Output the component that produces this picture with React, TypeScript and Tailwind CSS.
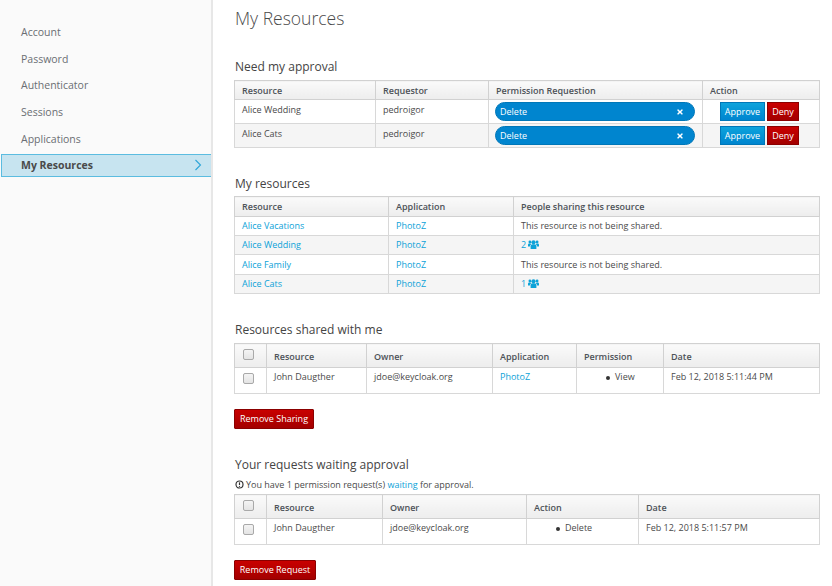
import React from "react";
import { FaTimes } from "react-icons/fa";

const th = "border border-[#d1d1d1] bg-gradient-to-b from-[#fafafa] to-[#ededed] px-[7px] py-0 text-left font-semibold text-[#4d5258] align-middle";
const td = "border border-[#d8d8d8] px-[7px] py-0 align-top text-[#4a4a4a]";
const link = "text-[#0ca2d8]";
const redBtn = "h-[20px] whitespace-nowrap rounded-[1px] border border-[#8b0000] bg-gradient-to-b from-[#c90000] to-[#a30000] px-[4px] text-[9px] font-medium leading-[18px] text-white";

function Nav({ label, active }: { label: string; active?: boolean }) {
  if (active)
    return (
      <div className="ml-[1px] flex h-[23px] items-center justify-between border border-r-0 border-[#5bbce0] bg-[#c7e4f0] pl-[19px] pr-[9px] font-bold text-[#4a4a4a]">
        <span>{label}</span>
        <svg width="8" height="12" viewBox="0 0 8 12" fill="none" stroke="#2da5d8" strokeWidth="1.1"><path d="M1.5 1l5 5-5 5" /></svg>
      </div>
    );
  return <div className="flex h-[26.6px] items-center pl-[21px] text-[#6a6e73]">{label}</div>;
}

function Heading({ children, className }: { children: React.ReactNode; className?: string }) {
  return <h2 className={"text-[12px] leading-[17px] text-[#444] " + (className ?? "")}>{children}</h2>;
}

function Check() {
  return <span className="block h-[11px] w-[11px] rounded-[2px] border border-[#a9a9a9] bg-gradient-to-b from-[#f4f4f4] to-[#e4e4e4]" />;
}

function Bullet() {
  return <span className="mr-[5px] inline-block h-[4px] w-[4px] rounded-full bg-[#333] align-middle" />;
}

function Pill() {
  return (
    <div className="flex h-[19px] w-[200px] items-center justify-between rounded-full border border-[#0077b8] bg-[#0085cf] pl-[4px] pr-[10px] font-medium text-white">
      <span>Delete</span>
      <FaTimes className="h-[8px] w-[8px]" />
    </div>
  );
}

function Actions() {
  return (
    <div className="flex justify-start gap-[2px] pl-[17px]">
      <span className="flex h-[19px] w-[45px] items-center justify-center border border-[#0077b8] bg-gradient-to-b from-[#0ea3dc] to-[#0085cf] text-[9px] font-medium text-white">Approve</span>
      <span className="flex h-[19px] w-[32px] items-center justify-center border border-[#8b0000] bg-gradient-to-b from-[#c90000] to-[#a30000] text-[9px] font-medium text-white">Deny</span>
    </div>
  );
}

function Row1({ name, alt }: { name: string; alt?: boolean }) {
  return (
    <tr className={alt ? "h-[24px] bg-[#f5f5f5]" : "h-[24px]"}>
      <td className={td + " pt-[3px]"}>{name}</td>
      <td className={td + " pt-[3px]"}>pedroigor</td>
      <td className={td + " !pl-[6px] pt-[2px]"}><Pill /></td>
      <td className={td + " !px-0 pt-[2px]"}><Actions /></td>
    </tr>
  );
}

function Row2({ name, people, alt, h }: { name: string; people: React.ReactNode; alt?: boolean; h: string }) {
  return (
    <tr className={(alt ? "bg-[#f5f5f5] " : "") + h}>
      <td className={td + " pb-[1px] !align-middle"}><span className={link}>{name}</span></td>
      <td className={td + " pb-[1px] !align-middle"}><span className={link}>PhotoZ</span></td>
      <td className={td + " pb-[1px] !align-middle"}>{people}</td>
    </tr>
  );
}

function Shared({ count }: { count: string }) {
  return (
    <span className={link + " inline-flex items-center gap-[2px]"}>
      {count}
      <svg width="11" height="9" viewBox="0 0 11 9" fill="currentColor">
        <circle cx="5.5" cy="2.3" r="2.1" />
        <path d="M2.6 9V6.2c0-1.2.9-1.9 2-1.9h1.8c1.1 0 2 .7 2 1.9V9z" />
        <circle cx="1.9" cy="2" r="1.4" />
        <circle cx="9.1" cy="2" r="1.4" />
        <path d="M0 6.6V4.9c0-.9.6-1.4 1.4-1.4h1.2c.1.4.3.7.6 1-.8.4-1.3 1-1.3 1.9v.2zM11 6.6V4.9c0-.9-.6-1.4-1.4-1.4H8.4c-.1.4-.3.7-.6 1 .8.4 1.3 1 1.3 1.9v.2z" />
      </svg>
    </span>
  );
}

export default function App() {
  return (
    <div className="flex h-[586px] w-[832px] overflow-hidden bg-white text-[9px] leading-[13px]" style={{ fontFamily: '"Open Sans", sans-serif' }}>
      <aside className="w-[213px] shrink-0 border-r-2 border-[#e7e7e7] bg-[#fafafa] pt-[19.4px] text-[10.5px]">
        <Nav label="Account" />
        <Nav label="Password" />
        <Nav label="Authenticator" />
        <Nav label="Sessions" />
        <Nav label="Applications" />
        <div className="h-[1.6px]" />
        <Nav label="My Resources" active />
      </aside>
      <main className="w-[585px] shrink-0 pl-[21px] pt-[6px] box-content">
        <h1 className="pl-[1px] text-[17.5px] font-light leading-[24px] text-[#4a4a4a]">My Resources</h1>

        <Heading className="mt-[28px] pl-[1px]">Need my approval</Heading>
        <table className="mt-[5px] w-[585px] table-fixed border-collapse border border-[#d8d8d8]">
          <colgroup><col className="w-[141px]" /><col className="w-[113px]" /><col className="w-[214px]" /><col className="w-[117px]" /></colgroup>
          <thead><tr className="h-[19px]"><th className={th}>Resource</th><th className={th}>Requestor</th><th className={th}>Permission Requestion</th><th className={th}>Action</th></tr></thead>
          <tbody>
            <Row1 name="Alice Wedding" />
            <Row1 name="Alice Cats" alt />
          </tbody>
        </table>

        <Heading className="mt-[27px] pl-[1px]">My resources</Heading>
        <table className="mt-[4px] w-[585px] table-fixed border-collapse border border-[#d8d8d8]">
          <colgroup><col className="w-[154px]" /><col className="w-[125px]" /><col className="w-[306px]" /></colgroup>
          <thead><tr className="h-[20px]"><th className={th}>Resource</th><th className={th}>Application</th><th className={th}>People sharing this resource</th></tr></thead>
          <tbody>
            <Row2 h="h-[19px]" name="Alice Vacations" people="This resource is not being shared." />
            <Row2 h="h-[19px]" name="Alice Wedding" alt people={<Shared count="2" />} />
            <Row2 h="h-[20px]" name="Alice Family" people="This resource is not being shared." />
            <Row2 h="h-[19px]" name="Alice Cats" alt people={<Shared count="1" />} />
          </tbody>
        </table>

        <Heading className="mt-[27px] pl-[1px]">Resources shared with me</Heading>
        <table className="mt-[5px] w-[585px] table-fixed border-collapse border border-[#d8d8d8]">
          <colgroup><col className="w-[32px]" /><col className="w-[100px]" /><col className="w-[126px]" /><col className="w-[84px]" /><col className="w-[87px]" /><col className="w-[156px]" /></colgroup>
          <thead>
            <tr className="h-[24px]">
              <th className={th + " !pl-[8px] pt-[5px] !align-top"}><Check /></th>
              <th className={th + " pt-[2px]"}>Resource</th><th className={th + " pt-[2px]"}>Owner</th><th className={th + " pt-[2px]"}>Application</th><th className={th + " pt-[2px]"}>Permission</th><th className={th + " pt-[2px]"}>Date</th>
            </tr>
          </thead>
          <tbody>
            <tr className="h-[26px]">
              <td className={td + " !pl-[8px] pt-[5px]"}><Check /></td>
              <td className={td + " pt-[2px]"}>John Daugther</td>
              <td className={td + " pt-[2px]"}>jdoe@keycloak.org</td>
              <td className={td + " pt-[2px]"}><span className={link}>PhotoZ</span></td>
              <td className={td + " !pl-[29px] pt-[2px]"}><Bullet />View</td>
              <td className={td + " pt-[2px]"}>Feb 12, 2018 5:11:44 PM</td>
            </tr>
          </tbody>
        </table>
        <button className={redBtn + " mt-[15px] block w-[80px]"}>Remove Sharing</button>

        <Heading className="mt-[27px] pl-[1px]">Your requests waiting approval</Heading>
        <p className="mt-[4px] flex h-[14px] items-center pl-[1px] text-[9px] text-[#4a4a4a]">
          <svg className="mr-[2px]" width="9" height="9" viewBox="0 0 10 10" fill="none" stroke="#333" strokeWidth="1.3"><circle cx="5" cy="5" r="3.9" /><path d="M5 2.6v3" /><path d="M5 6.6v1" /></svg>
          You have 1 permission request(s)&nbsp;<span className={link}>waiting</span>&nbsp;for approval.
        </p>
        <table className="mt-[3px] w-[585px] table-fixed border-collapse border border-[#d8d8d8]">
          <colgroup><col className="w-[32px]" /><col className="w-[116px]" /><col className="w-[144px]" /><col className="w-[112px]" /><col className="w-[181px]" /></colgroup>
          <thead>
            <tr className="h-[24px]">
              <th className={th + " !pl-[8px] pt-[5px] !align-top"}><Check /></th>
              <th className={th + " pt-[2px]"}>Resource</th><th className={th + " pt-[2px]"}>Owner</th><th className={th + " pt-[2px]"}>Action</th><th className={th + " pt-[2px]"}>Date</th>
            </tr>
          </thead>
          <tbody>
            <tr className="h-[26px]">
              <td className={td + " !pl-[8px] pt-[5px]"}><Check /></td>
              <td className={td + " pt-[2px]"}>John Daugther</td>
              <td className={td + " pt-[2px]"}>jdoe@keycloak.org</td>
              <td className={td + " !pl-[29px] pt-[2px]"}><Bullet />Delete</td>
              <td className={td + " pt-[2px]"}>Feb 12, 2018 5:11:57 PM</td>
            </tr>
          </tbody>
        </table>
        <button className={redBtn + " mt-[15px] block w-[82px]"}>Remove Request</button>
      </main>
    </div>
  );
}
